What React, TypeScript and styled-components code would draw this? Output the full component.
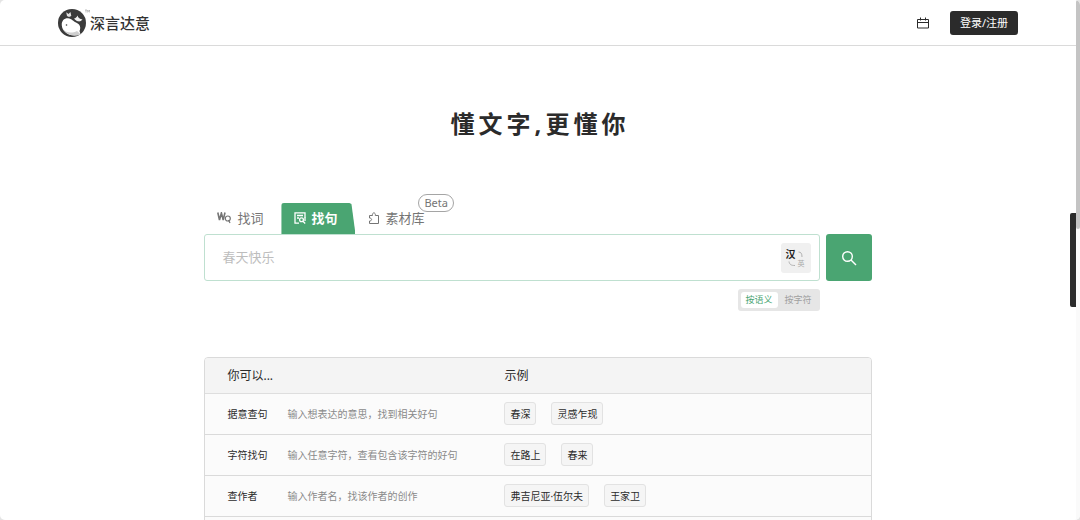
import React, { useState } from "react";
import styled, { createGlobalStyle } from "styled-components";

const GlobalStyle = createGlobalStyle`
  *, *::before, *::after { box-sizing: border-box; }
  body {
    margin: 0;
    background: #e4e4e4;
    color: #2b2b2b;
    font-family: "Noto Sans", "Noto Sans CJK SC", sans-serif;
    font-size: 10px;
    overflow: hidden;
  }
  button, input { font-family: inherit; margin: 0; }
`;

const Window = styled.div`
  position: relative;
  display: flex;
  height: 100vh;
  overflow: hidden;
  border-radius: 5px;
  background: #fff;
`;

const Page = styled.div`
  flex: 1;
  min-width: 0;
`;

const ScrollRail = styled.div`
  flex: none;
  width: 4px;
  background: #fafafa;
`;

const ScrollThumb = styled.div`
  height: 44%;
  border-radius: 2px;
  background: #c4c4c4;
`;

const SideHandle = styled.div`
  position: absolute;
  right: 4px;
  top: 41%;
  width: 6px;
  height: 94px;
  border-radius: 2px 0 0 2px;
  background: #2b2b2b;
`;

const Header = styled.header`
  display: flex;
  align-items: center;
  justify-content: space-between;
  height: 46px;
  padding: 0 58px;
  border-bottom: 1px solid #dadada;
`;

const Brand = styled.a`
  display: flex;
  align-items: center;
  color: #333;
  font-size: 15px;
  font-weight: 500;
  line-height: 20px;
  text-decoration: none;
`;

const Actions = styled.div`
  display: flex;
  align-items: center;
  gap: 21px;
`;

const IconButton = styled.button`
  display: flex;
  padding: 0;
  border: 0;
  background: none;
  color: #2b2b2b;
`;

const LoginButton = styled.button`
  height: 24px;
  padding: 0 10px;
  border: 0;
  border-radius: 3px;
  background: #2b2b2b;
  color: #fff;
  font-size: 11px;
  line-height: 16px;
`;

const Content = styled.main`
  width: 62%;
  min-width: 560px;
  margin: 0 auto;
`;

const Slogan = styled.h1`
  margin: 60px 0 0;
  padding-left: 4px;
  color: #2b2b2b;
  font-size: 24px;
  font-weight: 700;
  letter-spacing: 4px;
  line-height: 36px;
  text-align: center;
`;

const Tabs = styled.div`
  display: flex;
  margin-top: 61px;
`;

const Tab = styled.button<{ $active?: boolean }>`
  position: relative;
  display: flex;
  align-items: center;
  gap: 5px;
  height: 31px;
  padding: 0 18px 2px 13px;
  border: 0;
  border-radius: 3px 3px 0 0;
  background: ${(p) => (p.$active ? "#4aa572" : "transparent")};
  clip-path: ${(p) => (p.$active ? "polygon(0 0, 68px 0, 70px 1px, 100% 100%, 0 100%)" : "none")};
  color: ${(p) => (p.$active ? "#fff" : "#757575")};
  font-size: 13px;
  font-weight: ${(p) => (p.$active ? 700 : 400)};
  line-height: 20px;
`;

const BetaBadge = styled.span`
  position: absolute;
  top: -9px;
  left: 63px;
  padding: 0 5px;
  border: 1px solid #a5a5a5;
  border-radius: 9px;
  background: #fff;
  color: #757575;
  font-size: 11px;
  line-height: 16px;
`;

const SearchRow = styled.form`
  display: flex;
  gap: 6px;
`;

const SearchField = styled.div`
  flex: 1;
  display: flex;
  align-items: center;
  height: 47px;
  padding: 0 8px 0 17px;
  border: 1px solid #bfe0d0;
  border-radius: 3px;
`;

const SearchInput = styled.input`
  flex: 1;
  min-width: 0;
  padding: 0 0 2px;
  border: 0;
  outline: 0;
  background: none;
  font-size: 13px;
  line-height: 20px;
  &::placeholder { color: #bdbdbd; opacity: 1; }
`;

const LanguageButton = styled.button`
  position: relative;
  width: 30px;
  height: 30px;
  padding: 0;
  border: 0;
  border-radius: 3px;
  background: #f0f0f0;
`;

const SourceLanguage = styled.span`
  position: absolute;
  left: 5px;
  top: 4px;
  color: #1c1c1c;
  font-size: 10px;
  font-weight: 700;
  line-height: 14px;
`;

const TargetLanguage = styled.span`
  position: absolute;
  right: 6px;
  bottom: 4px;
  color: #a8a8a8;
  font-size: 7px;
  line-height: 10px;
`;

const SwapArcs = styled.svg`
  display: block;
`;

const SearchButton = styled.button`
  display: flex;
  align-items: center;
  justify-content: center;
  width: 46px;
  height: 47px;
  padding: 0;
  border: 0;
  border-radius: 3px;
  background: #4aa572;
  color: #fff;
`;

const ModeRow = styled.div`
  display: flex;
  justify-content: flex-end;
  margin: 8px 52px 0 0;
`;

const ModeSwitch = styled.div`
  display: flex;
  padding: 3px;
  border-radius: 3px;
  background: #e6e6e6;
`;

const ModeButton = styled.button<{ $active: boolean }>`
  height: 16px;
  padding: 0 5px;
  border: 0;
  border-radius: 3px;
  background: ${(p) => (p.$active ? "#fff" : "transparent")};
  color: ${(p) => (p.$active ? "#4aa572" : "#a0a0a0")};
  font-size: 9px;
  line-height: 16px;
  & + & { margin-left: 2px; }
`;

const Guide = styled.table`
  width: 100%;
  margin-top: 46px;
  border: 1px solid #dadada;
  border-radius: 4px 4px 0 0;
  border-spacing: 0;
  table-layout: fixed;
  overflow: hidden;
  background: #fbfbfb;
`;

const HeadCell = styled.th`
  height: 36px;
  padding: 0 0 0 22px;
  border-bottom: 1px solid #dedede;
  background: #f4f4f4;
  font-size: 12px;
  font-weight: 400;
  line-height: 18px;
  text-align: left;
  & + & { padding-left: 0; }
`;

const GuideRow = styled.tr`
  height: 41px;
`;

const Name = styled.th`
  padding: 0 0 1px 22px;
  border-bottom: 1px solid #dadada;
  font-size: 10px;
  font-weight: 400;
  line-height: 16px;
  text-align: left;
  white-space: nowrap;
`;

const Cell = styled.td`
  padding: 0 0 1px;
  border-bottom: 1px solid #dadada;
  color: #8a8a8a;
  font-size: 10px;
  line-height: 16px;
`;

const NameColumn = styled.col`
  width: 82px;
`;

const HintColumn = styled.col`
  width: 217px;
`;

const Examples = styled.div`
  display: flex;
  gap: 15px;
`;

const Example = styled.button`
  height: 23px;
  padding: 0 5px;
  border: 1px solid #e2e2e2;
  border-radius: 3px;
  background: #f5f5f5;
  color: #2b2b2b;
  font-size: 10px;
  line-height: 16px;
`;

const LogoMark = () => (
  <svg width="32" height="28" viewBox="0 0 32 28" aria-hidden="true">
    <circle cx="14" cy="14" r="14" fill="#3b3b3b" />
    <path d="M8.200 3.200l2.300 1.800 2-2 .8 4-2.300.9-2-.9z" fill="#e2e2e2" />
    <path d="M3.800 16.500C3.300 11.500 6.500 9 10 9.200c4 .3 5.300 3.300 8 4.300 3.800 1.500 5.300 4.800 3.500 8.500l1 3.200C17 27.500 11 26.500 7.800 23.500 5.500 21.500 4 19.500 3.800 16.500z" fill="#fff" />
    <path d="M5 20c3 4 9 4.500 14 2l3.500 3.200C16 28 8 26 5 20z" fill="#cfcfcf" />
    <path d="M16 9.500c1.700-.2 2.700-1.200 3.500-3 .5 1.500 1.200 2.500 2.500 3.200l2.500.8c-1.300 1.500-2.700 2.200-4.500 1.800-1.500-.3-2.800-1.300-4-2.800z" fill="#f2f2f2" />
    <circle cx="8.500" cy="16" r=".8" fill="#3b3b3b" />
    <path d="M27 1h2M28 1v2.500M29.700 3.500V1l1 1.500 1-1.500v2.500" stroke="#999" strokeWidth=".6" fill="none" />
  </svg>
);

const CalendarIcon = () => (
  <svg width="12" height="12" viewBox="0 0 12 12" fill="none" stroke="currentColor" aria-hidden="true">
    <path d="M.5 2.500h11v8.500H.5zM.5 5.500h11M3.500.5v3M8.500.5v3" />
  </svg>
);

const WordIcon = () => (
  <svg width="15" height="12" viewBox="0 0 15 12" fill="none" stroke="currentColor" strokeWidth="1.600" aria-hidden="true">
    <path d="M.8.5l1.700 7.500L4.400 1l1.800 7L8 .5" />
    <circle cx="10.800" cy="6.500" r="2.500" strokeWidth="1.200" />
    <path d="M11.500 8l1.500 3" strokeWidth="1.300" />
  </svg>
);

const SentenceIcon = () => (
  <svg width="12" height="12" viewBox="0 0 12 12" fill="none" stroke="currentColor" strokeWidth="1.300" aria-hidden="true">
    <path d="M5 11.200H1V.8h10v4.700M3 3.500h6M3 6h2" />
    <circle cx="7.500" cy="7.800" r="1.900" />
    <path d="M9 9.300l2.200 2.200M11 5v4" />
  </svg>
);

const MaterialIcon = () => (
  <svg width="12" height="12" viewBox="0 0 12 12" fill="none" stroke="currentColor" aria-hidden="true">
    <path d="M1.500 11.500V9c2.800 0 2.800-3 0-3V3.500h3C3.800 0 8 0 7.300 3.500H10.500v8z" />
  </svg>
);

const SearchIcon = () => (
  <svg width="16" height="16" viewBox="0 0 16 16" fill="none" stroke="currentColor" strokeWidth="1.400" aria-hidden="true">
    <circle cx="6.500" cy="6.500" r="4.800" />
    <path d="M10 10l5 5" />
  </svg>
);

const guide = [
  { name: "据意查句", hint: "输入想表达的意思，找到相关好句", examples: ["春深", "灵感乍现"] },
  { name: "字符找句", hint: "输入任意字符，查看包含该字符的好句", examples: ["在路上", "春来"] },
  { name: "查作者", hint: "输入作者名，找该作者的创作", examples: ["弗吉尼亚·伍尔夫", "王家卫"] },
];

export default function App() {
  const [mode, setMode] = useState("按语义");
  const [query, setQuery] = useState("");

  return (
    <Window>
      <GlobalStyle />
      <Page>
        <Header>
          <Brand href="#">
            <LogoMark />
            深言达意
          </Brand>
          <Actions>
            <IconButton type="button" aria-label="日历">
              <CalendarIcon />
            </IconButton>
            <LoginButton type="button">登录/注册</LoginButton>
          </Actions>
        </Header>
        <Content>
          <Slogan>懂文字,更懂你</Slogan>
          <Tabs role="tablist">
            <Tab type="button" role="tab">
              <WordIcon />
              找词
            </Tab>
            <Tab type="button" role="tab" aria-selected $active>
              <SentenceIcon />
              找句
            </Tab>
            <Tab type="button" role="tab">
              <MaterialIcon />
              素材库
              <BetaBadge>Beta</BetaBadge>
            </Tab>
          </Tabs>
          <SearchRow onSubmit={(e) => e.preventDefault()}>
            <SearchField>
              <SearchInput
                aria-label="搜索"
                placeholder="春天快乐"
                value={query}
                onChange={(e) => setQuery(e.target.value)}
              />
              <LanguageButton type="button">
                <SourceLanguage>汉</SourceLanguage>
                <SwapArcs width="30" height="30" viewBox="0 0 30 30" fill="none" stroke="#b0b0b0" aria-hidden="true">
                  <path d="M17.500 9c2.500 0 3.500 1.500 3.500 5M8 18.500c.5 3 2 4 6 4" />
                </SwapArcs>
                <TargetLanguage>英</TargetLanguage>
              </LanguageButton>
            </SearchField>
            <SearchButton type="submit" aria-label="搜索">
              <SearchIcon />
            </SearchButton>
          </SearchRow>
          <ModeRow>
            <ModeSwitch>
              {["按语义", "按字符"].map((m) => (
                <ModeButton key={m} type="button" $active={m === mode} onClick={() => setMode(m)}>
                  {m}
                </ModeButton>
              ))}
            </ModeSwitch>
          </ModeRow>
          <Guide>
            <colgroup>
              <NameColumn />
              <HintColumn />
              <col />
            </colgroup>
            <thead>
              <tr>
                <HeadCell colSpan={2}>你可以...</HeadCell>
                <HeadCell>示例</HeadCell>
              </tr>
            </thead>
            <tbody>
              {guide.map((row) => (
                <GuideRow key={row.name}>
                  <Name scope="row">{row.name}</Name>
                  <Cell>{row.hint}</Cell>
                  <Cell>
                    <Examples>
                      {row.examples.map((text) => (
                        <Example key={text} type="button">
                          {text}
                        </Example>
                      ))}
                    </Examples>
                  </Cell>
                </GuideRow>
              ))}
              <GuideRow>
                <Cell colSpan={3} />
              </GuideRow>
            </tbody>
          </Guide>
        </Content>
      </Page>
      <ScrollRail>
        <ScrollThumb />
      </ScrollRail>
      <SideHandle />
    </Window>
  );
}
